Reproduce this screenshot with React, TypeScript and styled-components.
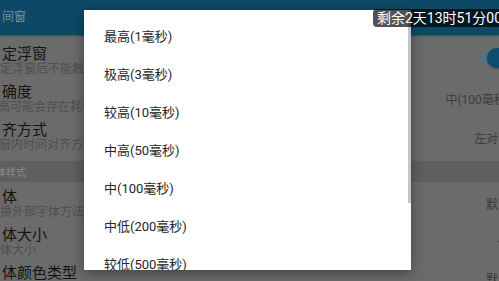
import React from "react";
import styled, { createGlobalStyle } from "styled-components";

const Global = createGlobalStyle`
  html, body { margin: 0; padding: 0; width: 499px; height: 281px; overflow: hidden; background: #6b6b6b; }
  * { box-sizing: border-box; }
`;

const FONT = `Roboto, "Noto Sans CJK SC", sans-serif`;

const Screen = styled.div`
  position: relative;
  width: 499px;
  height: 281px;
  overflow: hidden;
  background: #6b6b6b;
  font-family: ${FONT};
`;

const Header = styled.div`
  height: 35px;
  background: #0d4966;
  box-shadow: 0 1px 2px rgba(0, 0, 0, 0.35);
  display: flex;
  align-items: center;
  padding-left: 2px;
`;

const HeaderTitle = styled.span`
  font-size: 12px;
  color: #7592a1;
  line-height: 35px;
`;

const List = styled.div`
  display: flex;
  flex-direction: column;
`;

const Row = styled.div<{ $top: number }>`
  height: 38px;
  flex-shrink: 0;
  padding-top: ${(p) => p.$top}px;
  display: flex;
  justify-content: space-between;
  align-items: flex-start;
  white-space: nowrap;
`;

const TextCol = styled.div`
  display: flex;
  flex-direction: column;
`;

const Title = styled.div`
  font-size: 15px;
  line-height: 16px;
  color: #141414;
  margin-left: 2px;
`;

const Sub = styled.div<{ $indent?: number }>`
  font-size: 12px;
  line-height: 15px;
  color: #4f4f4f;
  margin-left: ${(p) => p.$indent ?? 0}px;
`;

const Value = styled.div<{ $dy: number }>`
  font-size: 12px;
  line-height: 14px;
  color: #3c3c3c;
  margin-top: ${(p) => p.$dy}px;
  margin-right: -11px;
`;

const Section = styled.div`
  margin-top: 12px;
  height: 21px;
  flex-shrink: 0;
  padding-top: 6px;
  background: #5f5f5f;
  font-size: 10px;
  line-height: 12px;
  color: #8a8a8a;
  white-space: nowrap;
`;

const SectionText = styled.span`
  margin-left: -4px;
  display: inline-block;
`;

const Switch = styled.div`
  position: relative;
  width: 34px;
  height: 12px;
  border-radius: 6px;
  background: #5b707c;
  margin-top: 6px;
  margin-right: -13px;
`;

const Thumb = styled.div`
  position: absolute;
  right: 5px;
  top: -4px;
  width: 20px;
  height: 20px;
  border-radius: 50%;
  background: #0b4c71;
  box-shadow: 0 1px 2px rgba(0, 0, 0, 0.3);
`;

const Popup = styled.div`
  position: absolute;
  left: 84px;
  top: 10px;
  width: 327px;
  height: 260px;
  background: #ffffff;
  box-shadow: 0 3px 12px rgba(0, 0, 0, 0.4);
  overflow: hidden;
  padding-top: 6px;
`;

const Item = styled.div`
  height: 38px;
  flex-shrink: 0;
  padding-left: 20px;
  display: flex;
  align-items: center;
  font-size: 13px;
  color: #262626;
  white-space: nowrap;
`;

const ScrollThumb = styled.div`
  position: absolute;
  right: 0;
  top: 0;
  width: 3px;
  height: 193px;
  background: #c6c6c6;
`;

const Badge = styled.div`
  position: absolute;
  left: 373px;
  top: 9px;
  height: 18px;
  padding: 0 4px;
  border-radius: 4px;
  background: rgba(0, 0, 0, 0.68);
  color: #ffffff;
  font-size: 14px;
  line-height: 18px;
  white-space: nowrap;
`;

type Setting = {
  title: string;
  sub: string;
  value?: string;
  dy?: number;
  toggle?: boolean;
  subIndent?: number;
};

const group1: Setting[] = [
  { title: "定浮窗", sub: "定浮窗后不能触摸", toggle: true },
  { title: "确度", sub: "高可能会存在耗电", value: "中(100毫秒)", dy: 9, subIndent: -2 },
  { title: "齐方式", sub: "窗内时间对齐方式", value: "左对齐", dy: 10, subIndent: -1 },
];

const group2: Setting[] = [
  { title: "体", sub: "换外部字体方法说", value: "默认", dy: 9 },
  { title: "体大小", sub: "体大小", value: "14", dy: 11 },
  { title: "体颜色类型", sub: "", value: "默认", dy: 8 },
];

const options = [
  "最高(1毫秒)",
  "极高(3毫秒)",
  "较高(10毫秒)",
  "中高(50毫秒)",
  "中(100毫秒)",
  "中低(200毫秒)",
  "较低(500毫秒)",
];

function SettingRow({ s, top }: { s: Setting; top: number }) {
  return (
    <Row $top={top}>
      <TextCol>
        <Title>{s.title}</Title>
        {s.sub && <Sub $indent={s.subIndent}>{s.sub}</Sub>}
      </TextCol>
      {s.toggle ? (
        <Switch>
          <Thumb />
        </Switch>
      ) : (
        <Value $dy={s.dy ?? 8}>{s.value}</Value>
      )}
    </Row>
  );
}

export default function App() {
  return (
    <>
      <Global />
      <Screen>
        <Header>
          <HeaderTitle>间窗</HeaderTitle>
        </Header>
        <List>
          {group1.map((s) => (
            <SettingRow key={s.title} s={s} top={11} />
          ))}
          <Section>
            <SectionText>体样式</SectionText>
          </Section>
          {group2.map((s) => (
            <SettingRow key={s.title} s={s} top={7} />
          ))}
        </List>
        <Popup>
          {options.map((o) => (
            <Item key={o}>{o}</Item>
          ))}
          <ScrollThumb />
        </Popup>
        <Badge>剩余2天13时51分00秒</Badge>
      </Screen>
    </>
  );
}
